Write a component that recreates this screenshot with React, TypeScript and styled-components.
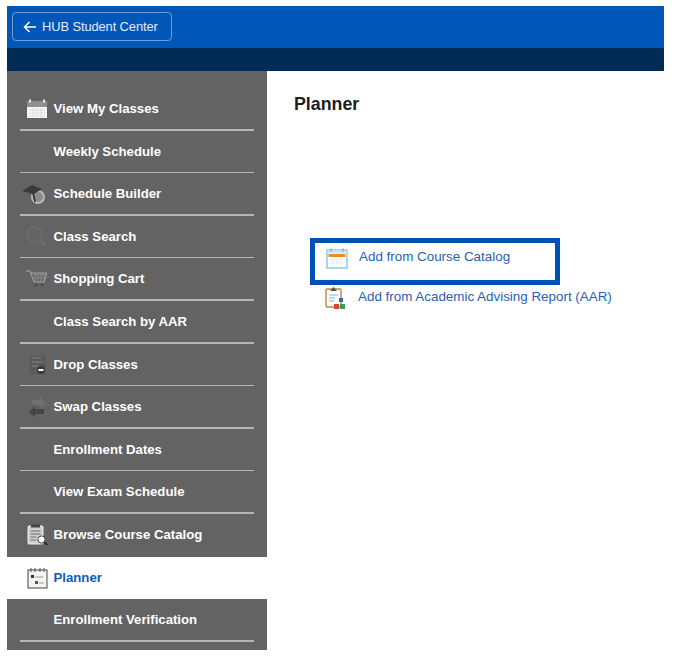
import React from 'react';
import styled, { createGlobalStyle } from 'styled-components';

const GlobalStyle = createGlobalStyle`
  html, body {
    margin: 0;
    padding: 0;
    background: #fff;
    font-family: "Liberation Sans", Arial, sans-serif;
  }
`;

const Page = styled.div`
  width: 675px;
  height: 658px;
  padding: 6px 11px 8px 7px;
  box-sizing: border-box;
  display: flex;
  flex-direction: column;
  overflow: hidden;
`;

const TopBar = styled.div`
  height: 42px;
  flex: none;
  background: #0057b8;
  box-sizing: border-box;
  padding-top: 6px;
  padding-left: 5px;
`;

const BackButton = styled.button`
  width: 160px;
  height: 29px;
  padding: 0 0 0 10px;
  display: flex;
  align-items: center;
  gap: 6px;
  background: transparent;
  border: 1px solid #6f9fd8;
  border-radius: 4px;
  color: #e4edf8;
  font-family: inherit;
  font-size: 12.9px;
  letter-spacing: -0.1px;
`;

const SubBar = styled.div`
  height: 23px;
  flex: none;
  background: #002b52;
`;

const Body = styled.div`
  flex: 1;
  display: flex;
  min-height: 0;
`;

const Sidebar = styled.nav`
  width: 260px;
  flex: none;
  background: #636363;
  padding-top: 17px;
  box-sizing: border-box;
`;

const NavItem = styled.div<{ $active?: boolean; $plain?: boolean }>`
  height: 42.6px;
  box-sizing: border-box;
  display: flex;
  align-items: center;
  position: relative;
  padding-left: 46.5px;
  padding-bottom: 1.5px;
  background: ${(p) => (p.$active ? '#fff' : 'transparent')};
  color: ${(p) => (p.$active ? '#0f5cb8' : '#fff')};
  font-size: 13.2px;
  font-weight: 700;
  white-space: nowrap;
  &::after {
    content: '';
    display: ${(p) => (p.$active || p.$plain ? 'none' : 'block')};
    position: absolute;
    left: 13px;
    width: 234px;
    bottom: 0;
    height: 1.5px;
    background: #b5b5b5;
  }
`;

const NavIcon = styled.span`
  position: absolute;
  left: 18px;
  top: 9px;
  width: 24px;
  height: 24px;
  display: block;
`;

const Content = styled.main`
  flex: 1;
  padding: 23px 0 0 27px;
`;

const Title = styled.h1`
  margin: 0;
  font-size: 17.8px;
  font-weight: 700;
  color: #1d1d1d;
  line-height: 20px;
`;

const LinkList = styled.div`
  margin-top: 124px;
  margin-left: 16px;
  display: flex;
  flex-direction: column;
`;

const LinkRow = styled.a<{ $boxed?: boolean }>`
  width: ${(p) => (p.$boxed ? '250px' : '330px')};
  height: ${(p) => (p.$boxed ? '47px' : '26px')};
  box-sizing: border-box;
  display: flex;
  align-items: center;
  gap: 11px;
  padding-left: ${(p) => (p.$boxed ? '11px' : '15px')};
  padding-bottom: ${(p) => (p.$boxed ? '8px' : '0')};
  border: ${(p) => (p.$boxed ? '5px solid #0050b5' : 'none')};
  color: #1f62b5;
  font-size: 13.4px;
  white-space: nowrap;
  & > svg {
    flex: none;
  }
`;

const LinkText = styled.span`
  padding-bottom: 3px;
`;

const CalendarIcon = () => (
  <svg width="24" height="24" viewBox="0 0 24 24">
    <rect x="2" y="4" width="20" height="17" fill="#f4f4f4" />
    <rect x="2" y="4" width="20" height="6" fill="#8f8f8f" />
    <rect x="4" y="2.5" width="2" height="3" fill="#e6e6e6" />
    <rect x="18" y="2.5" width="2" height="3" fill="#e6e6e6" />
    <path d="M4 13h16M4 16h16M4 19h16M8 11v9M12 11v9M16 11v9" stroke="#d4d4d4" strokeWidth=".6" />
  </svg>
);

const BuilderIcon = () => (
  <svg width="26" height="24" viewBox="0 0 26 24" style={{ marginLeft: -3 }}>
    <circle cx="16" cy="15" r="7" fill="#b9b9b9" />
    <circle cx="16" cy="15" r="5" fill="#8a8a8a" />
    <path d="M0 9 10 3l10 4-8 5z" fill="#3a3a3a" />
    <path d="M11 11 13 20" stroke="#2f2f2f" strokeWidth="1.6" />
  </svg>
);

const SearchIcon = () => (
  <svg width="24" height="24" viewBox="0 0 24 24" fill="none" stroke="#6f6f6f" strokeWidth="1.4">
    <circle cx="9.5" cy="9.5" r="7.5" />
    <path d="m15 15 6 6" strokeWidth="2" />
  </svg>
);

const CartIcon = () => (
  <svg width="24" height="24" viewBox="0 0 24 24" fill="none">
    <path d="M1 4h4l4 11h10l3-9H6" stroke="#a8a8a8" strokeWidth="1" />
    <path d="M8 8h13M9 11h11M10 6v9M13 6v9M16 6v9M19 6v9" stroke="#999" strokeWidth=".7" />
    <circle cx="11" cy="18" r="1.4" fill="#4a4a4a" />
    <circle cx="17" cy="18" r="1.4" fill="#4a4a4a" />
  </svg>
);

const DropIcon = () => (
  <svg width="24" height="24" viewBox="0 0 24 24">
    <rect x="4" y="2" width="17" height="20" fill="#5a5a5a" stroke="#6c6c6c" strokeWidth=".6" />
    <path d="M7 5h9M7 9h11M7 13h6" stroke="#767676" strokeWidth="1.5" />
    <circle cx="16" cy="17" r="4" fill="#3a3a3a" />
    <rect x="13.5" y="16" width="5" height="2" fill="#fff" />
  </svg>
);

const SwapIcon = () => (
  <svg width="24" height="24" viewBox="0 0 24 24">
    <path d="M7 5h8V2l6 6-6 5v-3H7z" fill="#707070" />
    <path d="M19 14h-9v-3l-6 6 6 5v-3h9z" fill="#454545" />
  </svg>
);

const CatalogIcon = () => (
  <svg width="24" height="24" viewBox="0 0 24 24">
    <rect x="3" y="3" width="15" height="18" rx="1" fill="#cfcfcf" stroke="#efefef" strokeWidth="1" />
    <rect x="6" y="1.5" width="9" height="3" fill="#444" />
    <path d="M5.5 8h10M5.5 11h10M5.5 14h6M5.5 17h6" stroke="#6b6b6b" strokeWidth="1" />
    <circle cx="16.5" cy="16.5" r="3.6" fill="#fff" stroke="#444" />
    <path d="m19 19 3.5 3" stroke="#222" strokeWidth="1.6" />
  </svg>
);

const PlannerIcon = () => (
  <svg width="24" height="24" viewBox="0 0 24 24">
    <rect x="3" y="4" width="19" height="18" fill="#f4f3ee" stroke="#555" strokeWidth="1.1" />
    <path d="M6 2v4M10 2v4M15 2v4M19 2v4" stroke="#555" strokeWidth="1" />
    <rect x="6" y="9" width="3" height="3" fill="#333" />
    <rect x="10" y="15" width="3" height="3" fill="#555" />
    <path d="M10 11h8M14 17h5" stroke="#999" strokeWidth="1" />
  </svg>
);

const AddCalendarIcon = () => (
  <svg width="22" height="22" viewBox="0 0 22 22">
    <rect x="1" y="3" width="20" height="18" fill="#fff" stroke="#7cc0ea" strokeWidth="1.3" />
    <rect x="1.5" y="3.5" width="19" height="3" fill="#cfe8f7" />
    <rect x="2.5" y="7" width="17" height="3" fill="#ee8a2c" />
    <path d="M3 13h16M3 16h16M7 11v9M11 11v9M15 11v9" stroke="#dfe6ea" strokeWidth=".7" />
    <path d="M5 1.5v3M17 1.5v3" stroke="#5fa9d8" strokeWidth="1.2" />
  </svg>
);

const AddReportIcon = () => (
  <svg width="22" height="24" viewBox="0 0 22 24">
    <rect x="1" y="3" width="15" height="18" rx="1" fill="#fff" stroke="#b58a4e" strokeWidth="1.4" />
    <path d="M5 5 8.5 1 12 5z" fill="#555" />
    <path d="M4 9h9M4 12h6M4 15h5" stroke="#7db4dc" strokeWidth="1.2" />
    <rect x="14" y="12" width="4" height="4" fill="#2f6fb0" />
    <rect x="9" y="18" width="5" height="5" fill="#d8443a" />
    <rect x="15" y="18" width="5" height="5" fill="#3f9a4a" />
  </svg>
);

const navItems: { label: string; icon?: React.ReactNode; active?: boolean; plain?: boolean }[] = [
  { label: 'View My Classes', icon: <CalendarIcon /> },
  { label: 'Weekly Schedule' },
  { label: 'Schedule Builder', icon: <BuilderIcon /> },
  { label: 'Class Search', icon: <SearchIcon /> },
  { label: 'Shopping Cart', icon: <CartIcon /> },
  { label: 'Class Search by AAR' },
  { label: 'Drop Classes', icon: <DropIcon /> },
  { label: 'Swap Classes', icon: <SwapIcon /> },
  { label: 'Enrollment Dates' },
  { label: 'View Exam Schedule' },
  { label: 'Browse Course Catalog', icon: <CatalogIcon />, plain: true },
  { label: 'Planner', icon: <PlannerIcon />, active: true },
  { label: 'Enrollment Verification' },
];

export default function App() {
  return (
    <Page>
      <GlobalStyle />
      <TopBar>
        <BackButton>
          <svg width="13" height="12" viewBox="0 0 13 12" fill="none" stroke="#fff" strokeWidth="1.5">
            <path d="M13 6H1.5M6.5 1 1.5 6l5 5" />
          </svg>
          HUB Student Center
        </BackButton>
      </TopBar>
      <SubBar />
      <Body>
        <Sidebar>
          {navItems.map((item) => (
            <NavItem key={item.label} $active={item.active} $plain={item.plain}>
              {item.icon && <NavIcon>{item.icon}</NavIcon>}
              {item.label}
            </NavItem>
          ))}
        </Sidebar>
        <Content>
          <Title>Planner</Title>
          <LinkList>
            <LinkRow $boxed>
              <AddCalendarIcon />
              <LinkText>Add from Course Catalog</LinkText>
            </LinkRow>
            <LinkRow>
              <AddReportIcon />
              <LinkText>Add from Academic Advising Report (AAR)</LinkText>
            </LinkRow>
          </LinkList>
        </Content>
      </Body>
    </Page>
  );
}
